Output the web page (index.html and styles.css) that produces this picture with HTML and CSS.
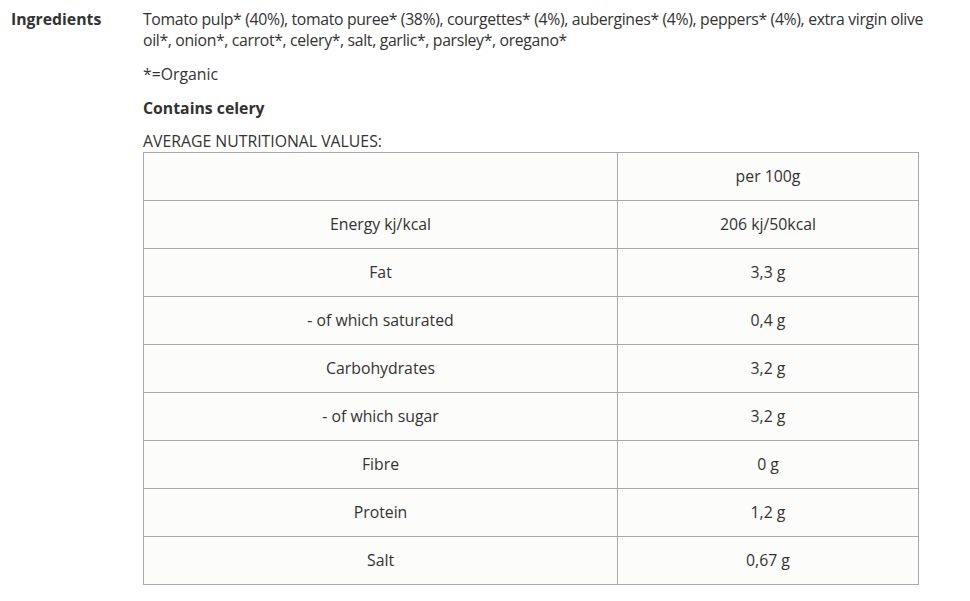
FILE: index.html
```html
<!DOCTYPE html>
<html>
<head>
<meta charset="utf-8">
<link rel="stylesheet" href="styles.css">
</head>
<body>
<div class="attr">
  <div class="label">Ingredients</div>
  <div class="value">
    <p class="ing">Tomato pulp* (40%), tomato puree* (38%), courgettes* (4%), aubergines* (4%), peppers* (4%), extra virgin olive oil*, onion*, carrot*, celery*, salt, garlic*, parsley*, oregano*</p>
    <p class="note">*=Organic</p>
    <p class="allergen">Contains celery</p>
    <p class="avg">AVERAGE NUTRITIONAL VALUES:</p>
    <table class="nutri">
      <tr><td class="c1"></td><td class="c2">per 100g</td></tr>
      <tr><td class="c1">Energy kj/kcal</td><td class="c2">206 kj/50kcal</td></tr>
      <tr><td class="c1">Fat</td><td class="c2">3,3 g</td></tr>
      <tr class="thick"><td class="c1">- of which saturated</td><td class="c2">0,4 g</td></tr>
      <tr><td class="c1">Carbohydrates</td><td class="c2">3,2 g</td></tr>
      <tr><td class="c1">- of which sugar</td><td class="c2">3,2 g</td></tr>
      <tr><td class="c1">Fibre</td><td class="c2">0 g</td></tr>
      <tr><td class="c1">Protein</td><td class="c2">1,2 g</td></tr>
      <tr><td class="c1">Salt</td><td class="c2">0,67 g</td></tr>
    </table>
  </div>
</div>
</body>
</html>
```
FILE: styles.css
```css
html, body {
  margin: 0;
  padding: 0;
  background: #ffffff;
}
body {
  font-family: "Open Sans", "Noto Sans", sans-serif;
  font-size: 15.8px;
  line-height: 21px;
  color: #333333;
}
.attr {
  display: flex;
  padding-top: 9px;
}
.label {
  width: 132px;
  padding-left: 11px;
  font-weight: 700;
  flex: none;
}
.value {
  width: 790px;
}
.value p {
  margin: 0;
}
.ing {
  letter-spacing: -0.34px;
}
.note {
  margin-top: 13px !important;
}
.allergen {
  margin-top: 13px !important;
  font-weight: 700;
}
.avg {
  margin-top: 12px !important;
}
.nutri {
  border-collapse: collapse;
  width: 776px;
  margin-top: 0;
  background: #fcfcfa;
}
.nutri td {
  border: 1px solid #a9a9a9;
  height: 47px;
  padding: 0;
  text-align: center;
  vertical-align: middle;
}
.nutri .c1 {
  width: 473px;
}
.nutri .thick td {
  border-top-color: #999999;
}
```
